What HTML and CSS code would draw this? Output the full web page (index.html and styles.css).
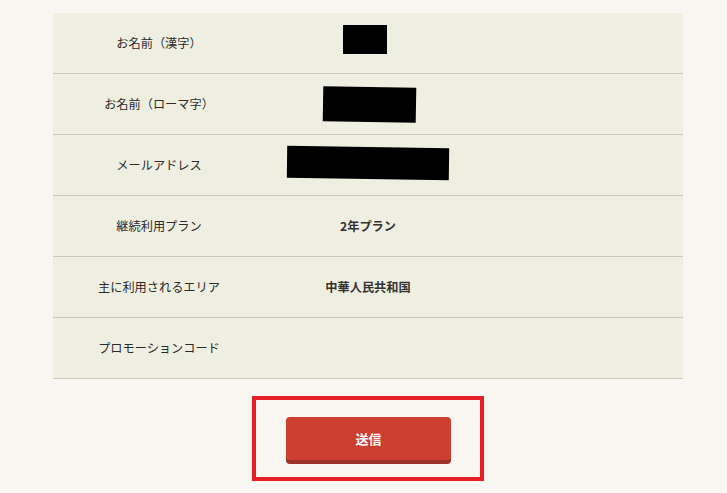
FILE: index.html
```html
<!DOCTYPE html>
<html lang="ja">
<head>
  <meta charset="UTF-8">
  <title>確認</title>
  <link rel="stylesheet" href="styles.css">
</head>
<body>
  <div class="page">
    <div class="confirm-table">
      <div class="row">
        <div class="label">お名前（漢字）</div>
        <div class="value"><span class="redact redact-name"></span></div>
      </div>
      <div class="row">
        <div class="label">お名前（ローマ字）</div>
        <div class="value"><span class="redact redact-roman"></span></div>
      </div>
      <div class="row">
        <div class="label">メールアドレス</div>
        <div class="value"><span class="redact redact-mail"></span></div>
      </div>
      <div class="row">
        <div class="label">継続利用プラン</div>
        <div class="value">2年プラン</div>
      </div>
      <div class="row">
        <div class="label">主に利用されるエリア</div>
        <div class="value">中華人民共和国</div>
      </div>
      <div class="row">
        <div class="label">プロモーションコード</div>
        <div class="value"></div>
      </div>
    </div>

    <div class="submit-area">
      <div class="highlight">
        <button type="button" class="submit-btn">送信</button>
      </div>
    </div>
  </div>
</body>
</html>
```

FILE: styles.css
```css
body {
  margin: 0;
  padding: 0;
  background-color: #f7f6f0;
  font-family: "Noto Sans CJK JP", "Noto Sans", sans-serif;
  color: #2b2b2b;
  font-size: 12.2px;
}
.page {
  width: 630px;
  margin-left: 53px;
  padding-top: 13px;
}
.confirm-table {
  background-color: #efefe1;
}
.row {
  display: grid;
  grid-template-columns: 210px 210px 1fr;
  height: 60px;
  align-items: center;
  border-bottom: 1px solid #c9cab9;
}
.label {
  text-align: center;
  padding-left: 2px;
}
.value {
  text-align: center;
  font-weight: bold;
  color: #333;
  display: flex;
  justify-content: center;
  align-items: center;
}
.redact {
  display: inline-block;
  background-color: #000;
}
.redact-name {
  width: 44px;
  height: 29px;
  margin-left: -6px;
  margin-top: -8px;
}
.redact-roman {
  width: 93px;
  height: 35px;
  margin-left: 2px;
  transform: rotate(1deg);
}
.redact-mail {
  width: 162px;
  height: 32px;
  margin-left: 0;
  margin-top: -4px;
  transform: rotate(0.8deg);
}
.submit-area {
  display: flex;
  justify-content: center;
  padding-top: 17px;
}
.highlight {
  border: 4px solid #e61f26;
  padding: 17px 29px 13px 30px;
}
.submit-btn {
  display: block;
  width: 165px;
  height: 43px;
  margin-bottom: 4px;
  background-color: #cc3e2f;
  color: #fff;
  border: none;
  border-radius: 4px;
  box-shadow: 0 4px 0 #9e3329;
  font-family: "Noto Sans CJK JP", sans-serif;
  font-size: 13px;
  font-weight: bold;
  cursor: pointer;
}
```
